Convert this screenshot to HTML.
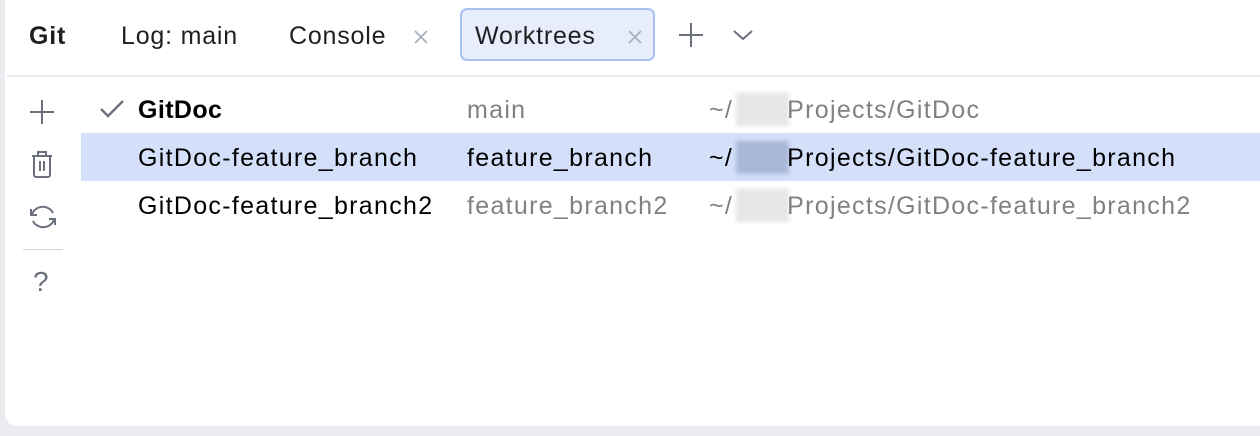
<!DOCTYPE html>
<html><head><meta charset="utf-8"><style>
body{margin:0;width:1260px;height:436px;background:#ebecf0;overflow:hidden;font-family:"Liberation Sans",sans-serif;position:relative}
#p{position:absolute;left:5px;top:0;width:1265px;height:426px;background:#fff;border-radius:0 0 0 12px}
.t{position:absolute;font-size:25px;letter-spacing:0.8px;color:#1e1f22;top:22px;white-space:nowrap}
.sep{position:absolute;left:7px;right:0;top:75px;height:2px;background:#ebecf0}
.row{position:absolute;left:81px;right:0;height:48px}
.c{position:absolute;font-size:25px;letter-spacing:1.3px;white-space:nowrap;top:11px}
.g{color:#818181}
.blur{position:absolute;left:655px;top:8px;width:53px;height:33px;background:#e6e6e8;filter:blur(2px)}
</style></head><body>
<div id="p"></div>
<div class="t" style="left:29px;font-weight:bold;letter-spacing:0.8px">Git</div>
<div class="t" style="left:121px">Log: main</div>
<div class="t" style="left:289px">Console</div>
<svg style="position:absolute;left:413px;top:29px" width="16" height="16"><path d="M2 2L14 14M14 2L2 14" stroke="#a8adbd" stroke-width="1.6"/></svg>
<div style="position:absolute;left:460px;top:8px;width:195px;height:53px;box-sizing:border-box;border:2px solid #a9c0f5;border-radius:7px;background:#e8edfc"></div>
<div class="t" style="left:475px">Worktrees</div>
<svg style="position:absolute;left:627px;top:29px" width="16" height="16"><path d="M2 2L14 14M14 2L2 14" stroke="#a8adbd" stroke-width="1.6"/></svg>
<svg style="position:absolute;left:677px;top:21px" width="28" height="28"><path d="M14 2V26M2 14H26" stroke="#6c707e" stroke-width="2"/></svg>
<svg style="position:absolute;left:731px;top:27px" width="24" height="16"><path d="M3 4L12 12L21 4" stroke="#6c707e" stroke-width="2" fill="none"/></svg>
<div class="sep"></div>
<svg style="position:absolute;left:28px;top:98px" width="28" height="28"><path d="M14 2V26M2 14H26" stroke="#6c707e" stroke-width="2"/></svg>
<svg style="position:absolute;left:30px;top:150px" width="24" height="30" fill="none" stroke="#6c707e" stroke-width="2"><path d="M2 6H22M8 6V2H16V6M4 6V25A2 2 0 0 0 6 27H18A2 2 0 0 0 20 25V6M10 11V21M14 11V21"/></svg>
<svg style="position:absolute;left:26px;top:202px" width="34" height="30" fill="none" stroke="#6c707e" stroke-width="2"><path d="M6 13A11 10 0 0 1 27 11M5 7V13H11"/><path d="M28 17A11 10 0 0 1 7 19M29 23V17H23"/></svg>
<div style="position:absolute;left:23px;top:249px;width:40px;height:1px;background:#d3d5db"></div>
<div style="position:absolute;left:33px;top:266px;font-size:28px;color:#6c707e">?</div>
<div class="row" style="top:85px">
<svg style="position:absolute;left:18px;top:14px" width="26" height="20"><path d="M2 10L9 17L24 2" stroke="#6c707e" stroke-width="2.4" fill="none"/></svg>
<div class="c" style="left:57px;font-weight:bold;color:#000;letter-spacing:0.4px">GitDoc</div>
<div class="c g" style="left:386px">main</div>
<div class="blur"></div>
<div class="c g" style="left:628px">~/<span style="display:inline-block;width:54px"></span>Projects/GitDoc</div>
</div>
<div class="row" style="top:133px;background:#d4e0fa">
<div class="c" style="left:57px;color:#000">GitDoc-feature_branch</div>
<div class="c" style="left:386px;color:#000">feature_branch</div>
<div class="blur" style="background:#a9b7d8"></div>
<div class="c" style="left:628px;color:#000">~/<span style="display:inline-block;width:54px"></span>Projects/GitDoc-feature_branch</div>
</div>
<div class="row" style="top:181px">
<div class="c" style="left:57px;color:#000">GitDoc-feature_branch2</div>
<div class="c g" style="left:386px">feature_branch2</div>
<div class="blur"></div>
<div class="c g" style="left:628px">~/<span style="display:inline-block;width:54px"></span>Projects/GitDoc-feature_branch2</div>
</div>
</body></html>
